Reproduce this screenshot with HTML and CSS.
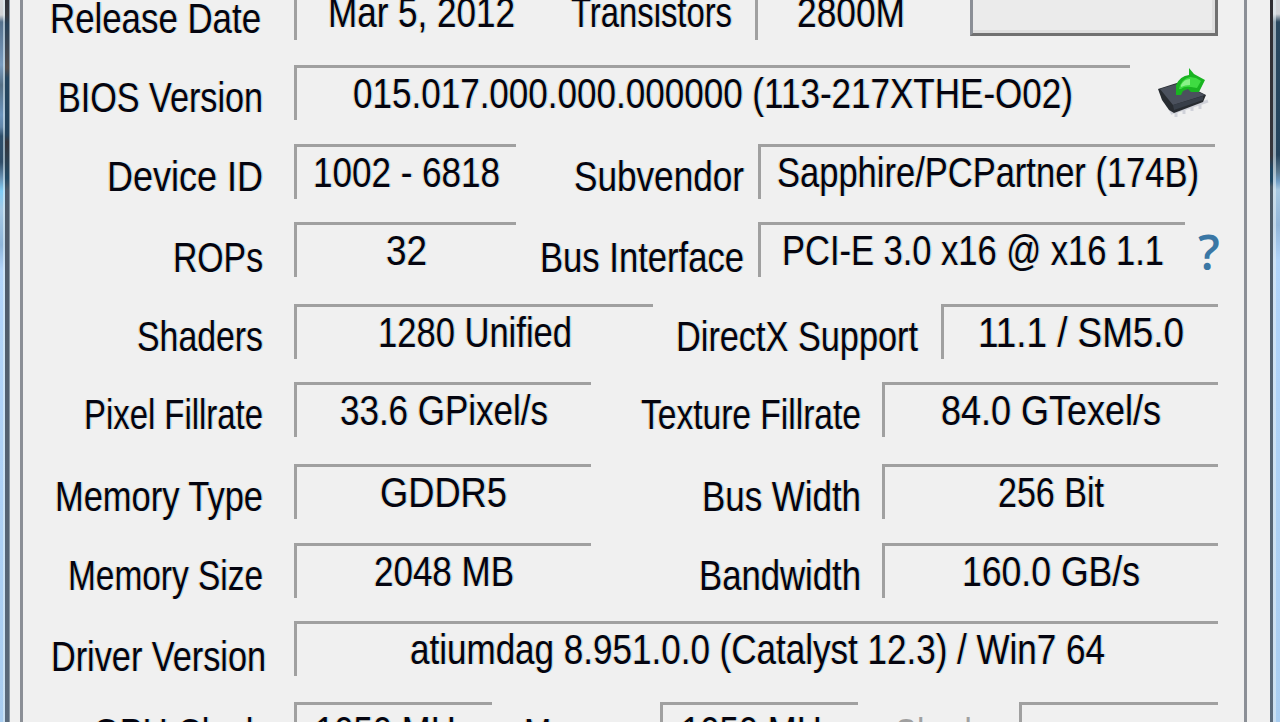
FILE: index.html
```
<!DOCTYPE html>
<html lang="en">
<head>
<meta charset="utf-8">
<title>Graphics Card</title>
<link rel="stylesheet" href="styles.css">
</head>
<body>
<div class="window">
  <div class="edge edge-left"></div>
  <main class="panel">
    <div class="row r-release">
      <div class="label low"><span class="fit" data-w="211">Release Date</span></div>
      <div class="field"><span class="fit" data-w="187">Mar 5, 2012</span></div>
      <div class="label"><span class="fit" data-w="161">Transistors</span></div>
      <div class="field"><span class="fit" data-w="108">2800M</span></div>
      <div class="button"></div>
    </div>
    <div class="row r-bios">
      <div class="label"><span class="fit" data-w="205">BIOS Version</span></div>
      <div class="field"><span class="fit" data-w="720">015.017.000.000.000000 (113-217XTHE-O02)</span></div>
      <svg class="chip" viewBox="0 0 54 54" width="54" height="54">
        <path d="M6 24 L16 46 L52 34 M20 42v8 M28 40v7 M36 37v7 M44 34v8" fill="none" stroke="#d0d2d9" stroke-width="3"/>
        <path d="M2 22 L24 15 L50 28 L47 35 L18 46 L13 43 L6 33 Z" fill="#282c31"/>
        <path d="M4 22 L24 16 L49 28 L17 38 Z" fill="#4b515d"/>
        <path d="M17 38 L47 29 V33 L18 43Z" fill="#383f49"/>
        <path d="M20 28 V18 Q24 9 33 8 V1 L38 7 L49 13 L43 25 L35 25 L32 22 L27 24 L25 28Z" fill="#19b421"/>
        <path d="M23 22 Q25 12 34 10 L40 11 L45 14 L41 21 L35 20 Q28 19 25 22Z" fill="#3fdb42"/>
        <path d="M25 18 Q28 12 34 12 V18 Q29 18 25 20Z" fill="#8af288"/>
      </svg>
    </div>
    <div class="row r-device">
      <div class="label"><span class="fit" data-w="156">Device ID</span></div>
      <div class="field"><span class="fit" data-w="187">1002 - 6818</span></div>
      <div class="label"><span class="fit" data-w="170">Subvendor</span></div>
      <div class="field"><span class="fit" data-w="422">Sapphire/PCPartner (174B)</span></div>
    </div>
    <div class="row r-rops">
      <div class="label low"><span class="fit" data-w="90">ROPs</span></div>
      <div class="field"><span class="fit" data-w="41">32</span></div>
      <div class="label low"><span class="fit" data-w="204">Bus Interface</span></div>
      <div class="field"><span class="fit" data-w="382">PCI-E 3.0 x16 @ x16 1.1</span></div>
      <div class="help">?</div>
    </div>
    <div class="row r-shaders">
      <div class="label"><span class="fit" data-w="126">Shaders</span></div>
      <div class="field"><span class="fit" data-w="194">1280 Unified</span></div>
      <div class="label"><span class="fit" data-w="242">DirectX Support</span></div>
      <div class="field"><span class="fit" data-w="206">11.1 / SM5.0</span></div>
    </div>
    <div class="row r-pair r-fill">
      <div class="label"><span class="fit" data-w="179">Pixel Fillrate</span></div>
      <div class="field"><span class="fit" data-w="208">33.6 GPixel/s</span></div>
      <div class="label"><span class="fit" data-w="220">Texture Fillrate</span></div>
      <div class="field"><span class="fit" data-w="220">84.0 GTexel/s</span></div>
    </div>
    <div class="row r-pair r-type">
      <div class="label"><span class="fit" data-w="208">Memory Type</span></div>
      <div class="field"><span class="fit" data-w="127">GDDR5</span></div>
      <div class="label"><span class="fit" data-w="159">Bus Width</span></div>
      <div class="field"><span class="fit" data-w="106">256 Bit</span></div>
    </div>
    <div class="row r-pair r-size">
      <div class="label"><span class="fit" data-w="195">Memory Size</span></div>
      <div class="field"><span class="fit" data-w="140">2048 MB</span></div>
      <div class="label"><span class="fit" data-w="162">Bandwidth</span></div>
      <div class="field"><span class="fit" data-w="178">160.0 GB/s</span></div>
    </div>
    <div class="row r-driver">
      <div class="label low"><span class="fit" data-w="215">Driver Version</span></div>
      <div class="field"><span class="fit" data-w="695">atiumdag 8.951.0.0 (Catalyst 12.3) / Win7 64</span></div>
    </div>
    <div class="row r-clock">
      <div class="label"><span class="fit" data-w="170">GPU Clock</span></div>
      <div class="field"><span class="fit" data-w="158">1050 MHz</span></div>
      <div class="label"><span class="fit" data-w="118">Memory</span></div>
      <div class="field"><span class="fit" data-w="158">1050 MHz</span></div>
      <div class="label off"><span class="fit" data-w="106">Shader</span></div>
      <div class="field"></div>
    </div>
  </main>
  <div class="edge edge-right"></div>
</div>
<script src="fit.js"></script>
</body>
</html>
```

FILE: styles.css
```
* { box-sizing: border-box; }
body {
  margin: 0;
  width: 1280px;
  height: 722px;
  overflow: hidden;
  background: #f0f0f0;
  color: #050510;
  font: 42px/48px "Liberation Sans", Arial, sans-serif;
}
.window { display: flex; height: 722px; }
.edge { display: flex; flex: none; width: 10px; }
.edge::before, .edge::after { content: ""; }

/* desktop sliver, pale glass, dark frame line */
.edge-left::before {
  width: 6px;
  background:
    linear-gradient(90deg, transparent 3px, rgba(225,240,245,.55) 3px),
    linear-gradient(#d5d8da 0, #cfd2d4 15px, #55718c 22px, #7a9cc0 65px, #557086 85px, #6c94bd 115px, #6286a9 127px, #2e4f6b 136px, #304d68 162px, #6891b3 178px, #80cdf5 191px, #a5c8e4 210px, #8fb6da 245px, #b3d5fa 270px, #a9cdf0 722px);
}
.edge-left::after {
  width: 4px;
  background: linear-gradient(#303238 0, #34383d 15px, #274158 25px, #544d4c 68px, #25455e 78px, #24425b 135px, #35343a 142px, #234963 178px, #4d5967 190px, #5a6a7b 722px);
  border-right: 1px solid #8b98a3;
}
.edge-right::before {
  width: 3px;
  background: linear-gradient(#2d2c31 0, #36353b 155px, #1c4563 170px, #204762 181px, #4c5b69 187px, #5a6a7b 722px);
}
.edge-right::after {
  width: 7px;
  background:
    linear-gradient(90deg, rgba(225,235,240,.6) 3px, transparent 3px),
    linear-gradient(#d0d3d7 0, #d0d3d7 14px, #294860 22px, #25445d 155px, #5a7990 172px, #6e9bc3 181px, #a8c9e2 190px, #92b6da 225px, #b0d4fa 260px, #a9cdf0 722px);
}
.panel {
  flex: none;
  width: 1227px;
  height: 722px;
  margin: 0 23px 0 10px;
  border: solid #8b8f96;
  border-width: 0 3px;
  overflow: hidden;
}

.row { display: grid; align-items: start; height: 78px; }
.label {
  padding: 9px 23px 0 0;
  text-align: right;
  height: 56px;
}
.label:first-child { padding-right: 31px; }
.label.low { padding-top: 12px; }
.off { color: #a0a0a0; }
.field {
  height: 55px;
  padding: 2px 1px 0 0;
  border: solid #a0a0a0;
  border-width: 3px 0 0 3px;
  text-align: center;
}
.fit {
  display: inline-block;
  height: 48px;
  text-align: left;
  white-space: pre;
  text-shadow: -1.5px 0 rgba(255, 175, 60, .38), 1.5px 0 rgba(60, 185, 255, .38);
}
.fit > span { display: inline-block; transform-origin: 0 0; }
.off .fit { text-shadow: none; }

/* columns are measured from the panel's inner left edge */
.r-release { grid-template-columns: 271px 252px 209px 189px 26px 248px; height: 80px; margin-top: -15px; }
.r-release .button { grid-column: 6; }
.r-release .label.low { padding-top: 10px; padding-right: 33px; }
.r-release .label:nth-child(3) { padding-top: 4px; }
.r-release .field { padding-top: 1px; }
.r-bios { grid-template-columns: 271px 836px 26px 54px; height: 79px; }
.r-device { grid-template-columns: 271px 222px 242px 457px; }
.r-device .label:nth-child(3), .r-rops .label:nth-child(3) { padding-right: 14px; }
.r-rops { grid-template-columns: 271px 222px 242px 427px 13px 30px; height: 82px; }
.r-shaders { grid-template-columns: 271px 359px 288px 277px; }
.r-pair { grid-template-columns: 271px 297px 291px 336px; }
.r-shaders .label:nth-child(3) { padding-right: 23px; }
.r-pair .label:nth-child(3) { padding-right: 21px; }
.r-fill { height: 82px; }
.r-type { height: 79px; }
.r-driver { grid-template-columns: 271px 924px; height: 81px; }
.r-driver .label:first-child { padding-right: 28px; }
.r-clock { grid-template-columns: 271px 198px 168px 198px 161px 199px; }
.r-clock .label { padding-top: 8px; }
.r-clock .label:nth-child(3), .r-clock .off { padding-right: 18px; }
.r-clock .field { padding-top: 3px; }

.button {
  height: 51px;
  background: #ebebeb;
  border: 3px solid #707070;
  border-left-color: #8b8f96;
  box-shadow: inset -3px -3px #dedede;
}
.chip { grid-column: 4; margin-top: 2px; }
.help {
  grid-column: 6;
  height: 56px;
  padding-top: 6px;
  color: #3a77a5;
  font: 600 48px/48px "Open Sans", sans-serif;
}
```

FILE: fit.js
```
document.querySelectorAll(".fit").forEach(function (box) {
  var inner = document.createElement("span");
  inner.textContent = box.textContent;
  box.textContent = "";
  box.appendChild(inner);
  var natural = inner.getBoundingClientRect().width;
  var wanted = Number(box.dataset.w);
  box.style.width = wanted + "px";
  inner.style.transform = "scaleX(" + wanted / natural + ")";
});
```
